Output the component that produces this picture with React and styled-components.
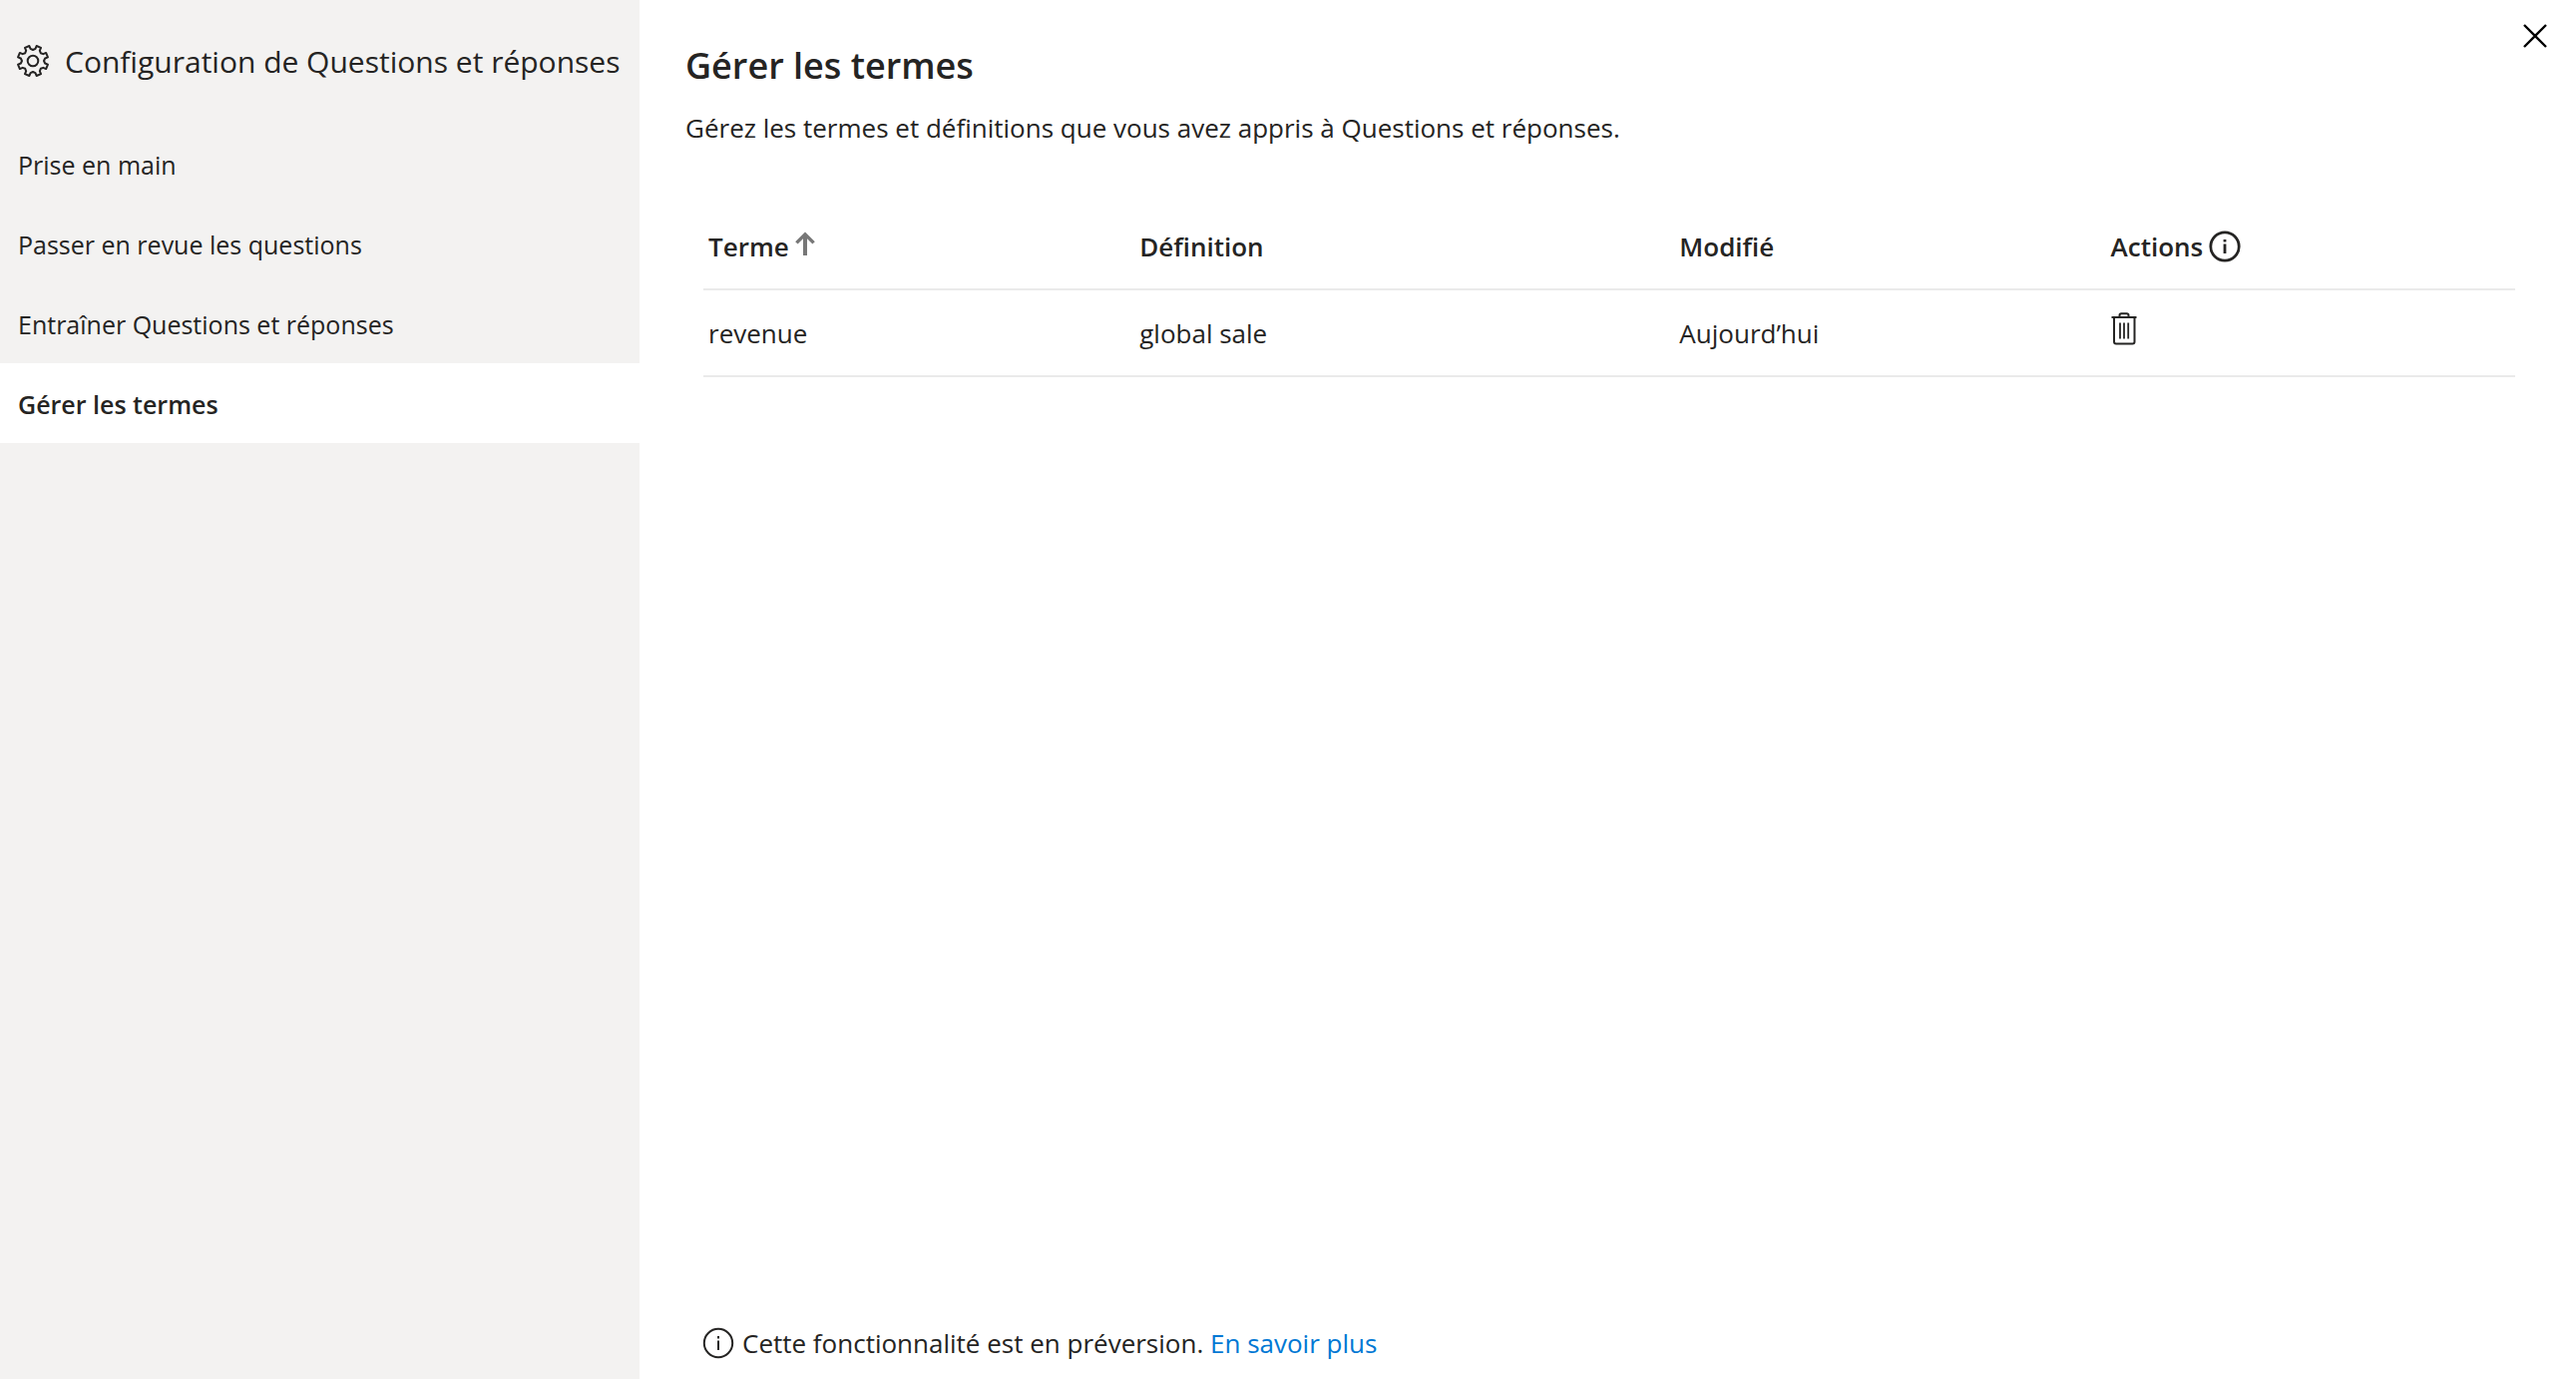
import React from "react";
import styled, { createGlobalStyle } from "styled-components";

const GlobalStyle = createGlobalStyle`
  *, *::before, *::after { box-sizing: border-box; }
  body {
    margin: 0;
    background: #ffffff;
    color: #252423;
    font-family: "Segoe UI", "Open Sans", "Noto Sans", sans-serif;
    font-size: 26px;
    line-height: 36px;
  }
`;

const Page = styled.div`
  display: grid;
  grid-template-columns: 641px minmax(0, 1fr);
  min-height: 100vh;
`;

const Sidebar = styled.aside`
  background: #f3f2f1;
`;

const SidebarHeader = styled.header`
  display: flex;
  align-items: center;
  gap: 15px;
  height: 124px;
  padding: 0 16px;
`;

const SidebarTitle = styled.h2`
  margin: 0;
  font-size: 30px;
  line-height: 40px;
  font-weight: 400;
  white-space: nowrap;
`;

const NavItem = styled.a`
  display: flex;
  align-items: center;
  height: 80px;
  padding: 2px 18px 0;
  color: inherit;
  font-size: 25px;
  text-decoration: none;
  white-space: nowrap;
  background: ${(p) => (p.$active ? "#ffffff" : "transparent")};
  font-weight: ${(p) => (p.$active ? 600 : 400)};
`;

const Main = styled.main`
  display: flex;
  flex-direction: column;
  padding: 16px 24px 18px 46px;
`;

const TitleRow = styled.div`
  display: flex;
  justify-content: space-between;
  align-items: flex-start;
`;

const Title = styled.h1`
  margin: 20px 0 0;
  font-size: 36px;
  line-height: 60px;
  font-weight: 600;
`;

const IconButton = styled.button`
  display: inline-flex;
  padding: ${(p) => p.$pad || "0"};
  border: 0;
  background: none;
  color: inherit;
  font: inherit;
  cursor: pointer;
`;

const Description = styled.p`
  margin: 14px 0 0;
`;

const Table = styled.table`
  table-layout: fixed;
  width: calc(100% - 55px);
  margin: 55px 0 0 18px;
  border-collapse: separate;
  border-spacing: 0;
`;

const Col = styled.col`
  width: ${(p) => p.$width};
`;

const cell = `
  padding: 0 5px;
  text-align: left;
  border-bottom: 2px solid #eaeaea;
`;

const HeadCell = styled.th`
  ${cell}
  height: 90px;
  padding-top: 4px;
  font-weight: 600;
`;

const BodyCell = styled.td`
  ${cell}
  height: 87px;
`;

const CellContent = styled.span`
  display: flex;
  align-items: center;
  gap: 6px;
`;

const Footer = styled.footer`
  display: flex;
  align-items: center;
  gap: 8px;
  margin: auto 0 0 17px;
`;

const Link = styled.a`
  color: #0078d4;
  text-decoration: none;
`;

const Svg = styled.svg`
  display: block;
  flex: none;
`;

const GEAR_TEETH = 8;

function gearPath() {
  const at = (r, deg) => {
    const a = (deg * Math.PI) / 180;
    return `${(17 + r * Math.cos(a)).toFixed(2)} ${(15 + r * Math.sin(a)).toFixed(2)}`;
  };
  const step = 360 / GEAR_TEETH;
  const points = [];
  for (let i = 0; i < GEAR_TEETH; i += 1) {
    const c = i * step + step / 2;
    points.push(at(12.4, c - 11), at(15.4, c - 9), at(15.4, c + 9), at(12.4, c + 11), at(11, c + step / 2));
  }
  return `M${points.join("L")}Z`;
}

const GearIcon = () => (
  <Svg width="34" height="36" viewBox="0 -2 34 36" fill="none" stroke="currentColor" strokeWidth="2" aria-hidden="true">
    <path d={gearPath()} strokeLinejoin="round" />
    <circle cx="17" cy="15" r="5.3" />
  </Svg>
);

const InfoIcon = ({ weight = 2 }) => (
  <Svg width="32" height="32" viewBox="0 0 32 32" fill="none" stroke="currentColor" strokeWidth={weight} aria-hidden="true">
    <circle cx="16" cy="16" r="14.2" />
    <path d="M16 13.5V23M16 9V11.5" />
  </Svg>
);

const ArrowUpIcon = () => (
  <Svg width="20" height="30" viewBox="0 0 20 30" fill="none" stroke="#777777" strokeWidth="4" aria-hidden="true">
    <path d="M10 24V3" />
    <path d="M1.4 11.4L10 2.8L18.6 11.4" strokeWidth="3.4" />
  </Svg>
);

const TrashIcon = () => (
  <Svg width="26" height="33" viewBox="0 0 26 33" fill="none" stroke="currentColor" strokeWidth="2" aria-hidden="true">
    <path d="M0.5 5H25.5" />
    <path d="M8.5 5V3Q8.5 1.2 10.3 1.2H15.7Q17.5 1.2 17.5 3V5" />
    <path d="M3 5V29.5Q3 31.5 5 31.5H21.5Q23.5 31.5 23.5 29.5V5" />
    <path d="M9 10.5V26.5M13 10.5V26.5M17.2 10.5V26.5" strokeWidth="1.8" />
  </Svg>
);

const CloseIcon = () => (
  <Svg width="24" height="24" viewBox="0 0 24 24" fill="none" stroke="#000000" strokeWidth="2.4" aria-hidden="true">
    <path d="M1 1L23 23M23 1L1 23" />
  </Svg>
);

const NAV = [
  "Prise en main",
  "Passer en revue les questions",
  "Entraîner Questions et réponses",
  "Gérer les termes",
];

const TERMS = [{ term: "revenue", definition: "global sale", modified: "Aujourd’hui" }];

export default function App() {
  return (
    <>
      <GlobalStyle />
      <Page>
        <Sidebar>
          <SidebarHeader>
            <GearIcon />
            <SidebarTitle>Configuration de Questions et réponses</SidebarTitle>
          </SidebarHeader>
          <nav>
            {NAV.map((label) => {
              const active = label === "Gérer les termes";
              return (
                <NavItem key={label} href="#" $active={active} aria-current={active ? "page" : undefined}>
                  {label}
                </NavItem>
              );
            })}
          </nav>
        </Sidebar>
        <Main>
          <TitleRow>
            <Title>Gérer les termes</Title>
            <IconButton type="button" $pad="8px 5px" aria-label="Fermer">
              <CloseIcon />
            </IconButton>
          </TitleRow>
          <Description>
            Gérez les termes et définitions que vous avez appris à Questions et réponses.
          </Description>
          <Table>
            <colgroup>
              <Col $width="23.8%" />
              <Col $width="29.8%" />
              <Col $width="23.8%" />
              <Col />
            </colgroup>
            <thead>
              <tr>
                <HeadCell scope="col" aria-sort="ascending">
                  <CellContent>
                    Terme
                    <ArrowUpIcon />
                  </CellContent>
                </HeadCell>
                <HeadCell scope="col">Définition</HeadCell>
                <HeadCell scope="col">Modifié</HeadCell>
                <HeadCell scope="col">
                  <CellContent>
                    Actions
                    <InfoIcon weight={2.8} />
                  </CellContent>
                </HeadCell>
              </tr>
            </thead>
            <tbody>
              {TERMS.map((row) => (
                <tr key={row.term}>
                  <BodyCell>{row.term}</BodyCell>
                  <BodyCell>{row.definition}</BodyCell>
                  <BodyCell>{row.modified}</BodyCell>
                  <BodyCell>
                    <IconButton type="button" aria-label="Supprimer">
                      <TrashIcon />
                    </IconButton>
                  </BodyCell>
                </tr>
              ))}
            </tbody>
          </Table>
          <Footer>
            <InfoIcon />
            <span>
              Cette fonctionnalité est en préversion. <Link href="#">En savoir plus</Link>
            </span>
          </Footer>
        </Main>
      </Page>
    </>
  );
}
